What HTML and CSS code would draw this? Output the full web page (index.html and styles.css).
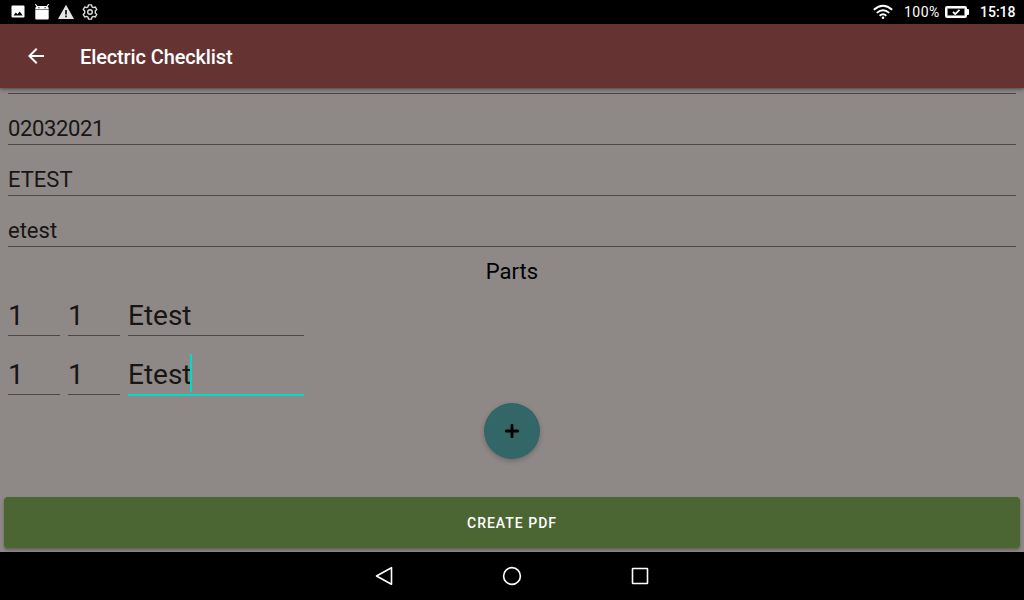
FILE: index.html
```html
<!DOCTYPE html>
<html lang="en">
<head>
<meta charset="utf-8">
<title>Electric Checklist</title>
<link rel="stylesheet" href="styles.css">
</head>
<body>
<div class="statusbar">
  <div class="notifications">
    <svg width="16" height="16" viewBox="0 0 16 16"><path fill="#fff" fill-rule="evenodd" d="M2.500 1.500h11a1 1 0 0 1 1 1v10a1 1 0 0 1-1 1h-11a1 1 0 0 1-1-1v-10a1 1 0 0 1 1-1zM3.500 11.500h9.200L9.700 7.500 7.500 10.300 5.800 8.500z"/></svg>
    <svg width="16" height="16" viewBox="0 0 16 16"><path d="M1.300.2 3.500 3M14.700.2 12.500 3" stroke="#fff" stroke-width="1.100"/><path fill="#fff" fill-rule="evenodd" d="M1.300 5.400V4.600Q1.500 2 4 2h8q2.500 0 2.700 2.600v.8zM4.300 3.200v1.100h1.200V3.200zm6.200 0v1.100h1.200V3.200z"/><path fill="#fff" d="M1.300 6h13.400v8.500q0 1-1 1H2.300q-1 0-1-1z"/></svg>
    <svg width="16" height="16" viewBox="0 0 16 16"><path fill="#e4e4e4" fill-rule="evenodd" d="M8 .8 16 15H0zM7.200 6v4.500h1.600V6zm0 5.500v1.700h1.600v-1.700z"/></svg>
    <svg width="16" height="16" viewBox="0 0 16 16" fill="none" stroke="#dedede" stroke-width="1.400" stroke-linejoin="round"><path d="M6.500.9h3l.5 2 1.300.7 2-.6 1.500 2.600L13.300 7v2l1.500 1.400-1.500 2.600-2-.6-1.300.7-.5 2h-3l-.5-2-1.300-.7-2 .6-1.500-2.600L2.700 9V7L1.200 5.600 2.700 3l2 .6L6 2.900z"/><circle cx="8" cy="8" r="2.300"/></svg>
  </div>
  <div class="system">
    <svg class="wifi" width="20" height="16" viewBox="0 0 20 16" fill="none" stroke="#fff" stroke-width="1.900"><path d="M.8 5.800Q10-2.200 19.200 5.800M3.800 8.900Q10 3.600 16.200 8.900M6.600 11.700Q10 8.900 13.400 11.700"/><circle cx="10" cy="13.700" r="1.300" fill="#fff" stroke="none"/></svg>
    <span class="percent">100%</span>
    <svg class="battery" width="24" height="12" viewBox="0 0 24 12"><rect x="1" y="1" width="20" height="10" rx="1" fill="none" stroke="#fff" stroke-width="2"/><path fill="none" stroke="#fff" stroke-width=".8" d="M2.200 2.200h17.600v7.600H2.200z"/><path fill="#fff" d="M22 3h1q1 0 1 1v4q0 1-1 1h-1z"/><path d="m8 6 2.200 2 4.300-4.200" fill="none" stroke="#fff" stroke-width="1.700"/></svg>
    <span class="clock">15:18</span>
  </div>
</div>
<header class="appbar">
  <svg width="16" height="16" viewBox="0 0 16 16"><path fill="#fff" d="M16 7H3.830l5.590-5.590L8 0 0 8l8 8 1.410-1.410L3.830 9H16z"/></svg>
  <h1 class="title">Electric Checklist</h1>
</header>
<main class="content">
  <div class="field clipped"></div>
  <div class="field number">02032021</div>
  <div class="field">ETEST</div>
  <div class="field">etest</div>
  <h2 class="heading">Parts</h2>
  <div class="part"><div class="cell">1</div><div class="cell">1</div><div class="cell wide">Etest</div></div>
  <div class="part"><div class="cell">1</div><div class="cell">1</div><div class="cell wide focused">Etest<span class="caret"></span></div></div>
  <div class="fab"><svg width="14" height="14" viewBox="0 0 14 14"><path d="M7 1.200v11.600M1.200 7h11.600" stroke="#000" stroke-width="2.800" stroke-linecap="round"/></svg></div>
  <div class="create">CREATE PDF</div>
</main>
<nav class="navbar">
  <svg width="20" height="20" viewBox="0 0 20 20"><path d="M17.500 1.700v16.600L2.500 10z"/></svg>
  <svg width="20" height="20" viewBox="0 0 20 20"><circle cx="10" cy="10" r="8.400"/></svg>
  <svg width="20" height="20" viewBox="0 0 20 20"><rect x="2.500" y="2.500" width="15" height="15" rx=".5"/></svg>
</nav>
</body>
</html>
```
FILE: styles.css
```css
* { box-sizing: border-box; }
body {
  margin: 0;
  width: 1024px;
  height: 600px;
  display: flex;
  flex-direction: column;
  overflow: hidden;
  font-family: Roboto, "Liberation Sans", sans-serif;
  background: #8e8887;
}
svg { display: block; flex: none; }
.statusbar {
  height: 24px;
  flex: none;
  display: flex;
  align-items: center;
  justify-content: space-between;
  padding: 0 8px 0 10px;
  background: #000;
  color: #fff;
  font-size: 14px;
}
.notifications { display: flex; gap: 8px; }
.system { display: flex; align-items: center; line-height: 24px; }
.percent { margin-left: 11px; width: 41px; letter-spacing: .5px; }
.clock { margin-left: 11px; font-weight: 500; width: 36px; }
.appbar {
  height: 64px;
  flex: none;
  display: flex;
  align-items: center;
  gap: 36px;
  padding-left: 28px;
  background: #663333;
  color: #fff;
  box-shadow: 0 1px 4px rgba(0, 0, 0, .5);
  z-index: 1;
}
.title { margin: 2px 0 0; font-size: 20px; font-weight: 500; line-height: 24px; letter-spacing: -.12px; }
.content { height: 464px; flex: none; display: flex; flex-direction: column; }
.field {
  height: 51px;
  margin: 0 8px;
  padding-top: 21px;
  border-bottom: 1px solid #4c4847;
  font-size: 22px;
  line-height: 28px;
  color: #171615;
}
.clipped { height: 6px; padding: 0; }
.number { letter-spacing: -.36px; }
.heading {
  margin: 0;
  height: 42px;
  padding-top: 10px;
  text-align: center;
  font-size: 22px;
  font-weight: 400;
  line-height: 30px;
  color: #000;
}
.part { display: flex; gap: 8px; height: 59px; margin-left: 8px; }
.cell {
  width: 52px;
  height: 47px;
  padding-top: 8px;
  border-bottom: 1px solid #4c4847;
  font-size: 28px;
  line-height: 37px;
  color: #171615;
}
.wide { width: 176px; display: flex; }
.focused { height: 48px; border-bottom: 2px solid #00dac6; }
.caret { width: 2px; height: 38px; margin: -2px 0 0 -2px; background: #00dac6; }
.fab {
  width: 56px;
  height: 56px;
  margin: -4px auto 0;
  border-radius: 50%;
  background: #336666;
  display: flex;
  align-items: center;
  justify-content: center;
  box-shadow: 0 2px 5px rgba(0, 0, 0, .22);
}
.create {
  height: 51px;
  margin: 38px 4px 0;
  border-radius: 4px;
  background: #4c6633;
  color: #fff;
  text-align: center;
  font-size: 14px;
  font-weight: 500;
  line-height: 52px;
  letter-spacing: 1px;
  box-shadow: 0 2px 3px rgba(0, 0, 0, .3);
}
.navbar {
  height: 48px;
  flex: none;
  z-index: 1;
  display: flex;
  align-items: center;
  justify-content: center;
  gap: 108px;
  background: #000;
  fill: none;
  stroke: #fff;
  stroke-width: 1.600;
  stroke-linejoin: round;
}
```
